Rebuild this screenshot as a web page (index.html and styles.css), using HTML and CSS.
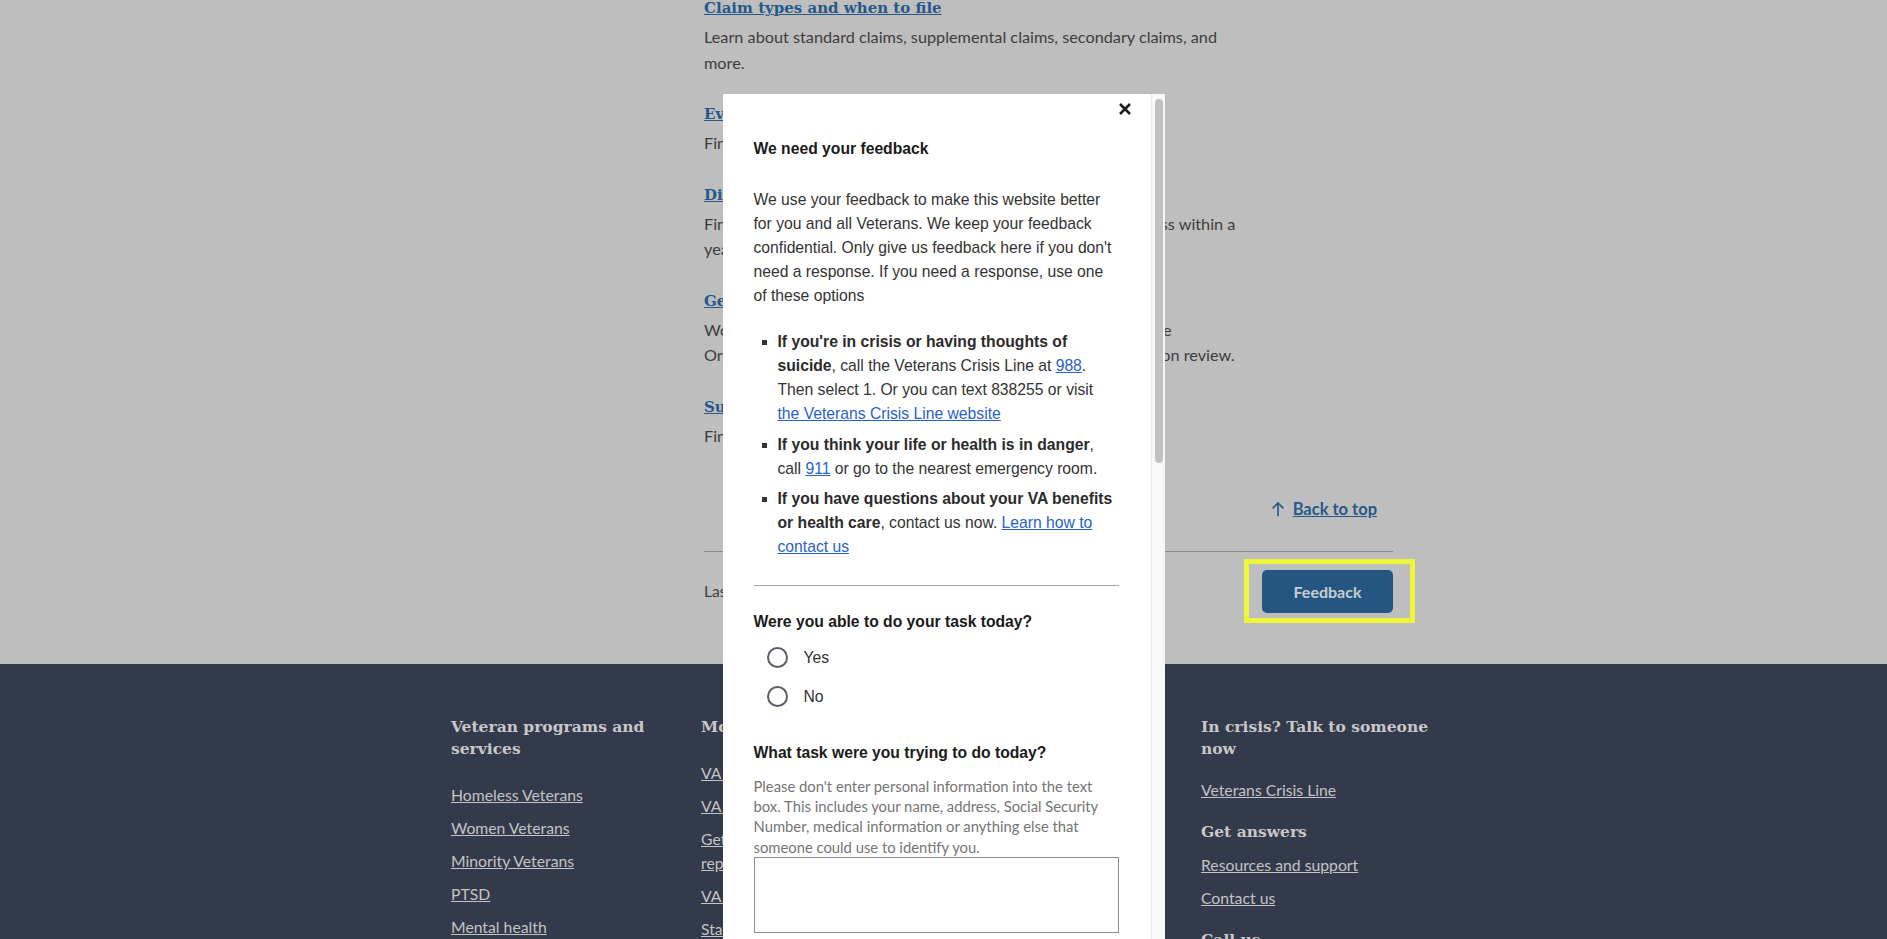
FILE: index.html
```html
<!DOCTYPE html>
<html lang="en">
<head>
<meta charset="utf-8">
<title>How to file a VA disability claim</title>
<link rel="stylesheet" href="styles.css">
</head>
<body>
<div class="page">
  <main class="layout">
    <aside class="sidenav"></aside>
    <div class="content">
      <section class="related">
        <div class="item">
          <h3><a href="#">Claim types and when to file</a></h3>
          <p>Learn about standard claims, supplemental claims, secondary claims, and more.</p>
        </div>
        <div class="item">
          <h3><a href="#">Evidence needed for your disability claim</a></h3>
          <p>Find out what evidence you need to submit with your claim.</p>
        </div>
        <div class="item">
          <h3><a href="#">Disability benefits after discharge</a></h3>
          <p>Find out if you can get disability compensation for a chronic illness within a year after you leave active service.</p>
        </div>
        <div class="item">
          <h3><a href="#">Get help filing your claim</a></h3>
          <p>Work with a trusted, accredited professional or a Veterans Service Organization (VSO) to help you file your claim or request a decision review.</p>
        </div>
        <div class="item">
          <h3><a href="#">Submit evidence for a claim</a></h3>
          <p>Find out how to submit evidence after you file.</p>
        </div>
      </section>
      <div class="back-row">
        <a class="back" href="#">
          <svg class="back-icon" width="16" height="16" viewBox="0 0 24 24" aria-hidden="true"><path d="M12 23V3M4 11l8-8 8 8" fill="none" stroke="currentColor" stroke-width="2.4"/></svg>
          <span>Back to top</span>
        </a>
      </div>
      <hr class="rule">
      <div class="meta-row">
        <p class="updated">Last updated: March 26, 2024</p>
        <div class="focus-ring"><button class="feedback-btn" type="button">Feedback</button></div>
      </div>
    </div>
  </main>
  <footer class="footer">
    <div class="footer-grid">
      <div class="fcol">
        <h2>Veteran programs and services</h2>
        <ul>
          <li><a href="#">Homeless Veterans</a></li>
          <li><a href="#">Women Veterans</a></li>
          <li><a href="#">Minority Veterans</a></li>
          <li><a href="#">PTSD</a></li>
          <li><a href="#">Mental health</a></li>
          <li><a href="#">Adaptive sports</a></li>
        </ul>
      </div>
      <div class="fcol">
        <h2>More VA resources</h2>
        <ul>
          <li><a href="#">VA forms</a></li>
          <li><a href="#">VA mobile apps</a></li>
          <li><a href="#">Get help from an accredited representative</a></li>
          <li><a href="#">VA Privacy Service</a></li>
          <li><a href="#">State Veterans Affairs offices</a></li>
        </ul>
      </div>
      <div class="fcol">
        <h2>Get VA updates</h2>
        <ul>
          <li><a href="#">Sign up for email</a></li>
          <li><a href="#">Facebook</a></li>
          <li><a href="#">Instagram</a></li>
          <li><a href="#">YouTube</a></li>
        </ul>
      </div>
      <div class="fcol">
        <h2>In crisis? Talk to someone now</h2>
        <ul class="crisis-links">
          <li><a href="#">Veterans Crisis Line</a></li>
        </ul>
        <h2 class="sub">Get answers</h2>
        <ul class="answer-links">
          <li><a href="#">Resources and support</a></li>
          <li><a href="#">Contact us</a></li>
        </ul>
        <h2 class="sub">Call us</h2>
      </div>
    </div>
  </footer>
</div>

<div class="overlay">
  <div class="modal" role="dialog" aria-labelledby="fb-title">
    <div class="modal-body">
      <div class="modal-top">
        <button class="close" type="button" aria-label="Close">
          <svg width="12" height="12" viewBox="0 0 12 12" aria-hidden="true"><path d="M1 1L11 11M11 1L1 11" stroke="#1b1b1b" stroke-width="2.5" fill="none"/></svg>
        </button>
      </div>
      <h2 class="m-title" id="fb-title">We need your feedback</h2>
      <p class="m-intro">We use your feedback to make this website better for you and all Veterans. We keep your feedback confidential. Only give us feedback here if you don't need a response. If you need a response, use one of these options</p>
      <ul class="m-list">
        <li><strong>If you're in crisis or having thoughts of suicide</strong>, call the Veterans Crisis Line at <a href="#">988</a>. Then select 1. Or you can text 838255 or visit <a href="#">the Veterans Crisis Line website</a></li>
        <li><strong>If you think your life or health is in danger</strong>, call <a href="#">911</a> or go to the nearest emergency room.</li>
        <li><strong>If you have questions about your VA benefits or health care</strong>, contact us now. <a href="#">Learn how to contact us</a></li>
      </ul>
      <hr class="m-rule">
      <div class="m-question">Were you able to do your task today?</div>
      <div class="radios">
        <label class="radio"><span class="dot"></span><span>Yes</span></label>
        <label class="radio"><span class="dot"></span><span>No</span></label>
      </div>
      <label class="m-label" for="task">What task were you trying to do today?</label>
      <p class="m-hint">Please don't enter personal information into the text box. This includes your name, address, Social Security Number, medical information or anything else that someone could use to identify you.</p>
      <textarea class="m-text" id="task"></textarea>
    </div>
    <div class="m-scroll"><div class="m-thumb"></div></div>
  </div>
</div>
</body>
</html>
```

FILE: styles.css
```css
* { box-sizing: border-box; }

html, body {
  margin: 0;
  height: 100%;
  overflow: hidden;
}

body {
  background: #bebebe;
  font-family: Lato, "Liberation Sans", sans-serif;
  color: #3d3d3d;
}

/* ---------- main page ---------- */
.layout {
  width: 1000px;
  margin: 0 auto;
  display: grid;
  grid-template-columns: 250px 1fr;
}

.content {
  display: flex;
  flex-direction: column;
  padding: 0 50.5px 0 10.5px;
}

.related {
  display: flex;
  flex-direction: column;
  gap: 27px;
  margin-top: -4px;
}

.item h3 {
  margin: 0 0 4px;
  font: bold 15px/24px "DejaVu Serif", serif;
}

.item h3 a {
  color: #27588a;
  text-decoration: underline;
}

.item p {
  margin: 0;
  max-width: 548px;
  font-size: 16.25px;
  line-height: 25.5px;
}

.back-row {
  display: flex;
  justify-content: flex-end;
  margin-top: 49px;
  padding-right: 16px;
  line-height: 24px;
}

.back {
  display: inline-flex;
  align-items: center;
  gap: 7px;
  color: #27588a;
  font-weight: bold;
  font-size: 16.5px;
  text-decoration: none;
}

.back span { text-decoration: underline; }

.back-icon { display: block; }

.rule {
  margin: 30px 0 0;
  border: 0;
  border-top: 1px solid #8a8a8a;
  height: 0;
}

.meta-row {
  display: flex;
  justify-content: space-between;
  align-items: center;
  margin-top: 7px;
}

.updated {
  margin: 0;
  font-size: 15.5px;
}

.focus-ring {
  display: flex;
  border: 5px solid #eef63b;
  padding: 6px 17px 5px 13px;
  margin-right: -22px;
}

.feedback-btn {
  width: 131px;
  height: 43px;
  border: 0;
  border-radius: 5px;
  background: #245681;
  color: #c9ccd0;
  font: bold 16px Lato, sans-serif;
}

/* ---------- footer ---------- */
.footer {
  margin-top: 41px;
  background: #323a4b;
  padding-top: 52px;
  height: 520px;
}

.footer-grid {
  width: 1000px;
  margin: 0 auto;
  display: grid;
  grid-template-columns: repeat(4, 250px);
}

.fcol { padding: 0 7.5px; }

.fcol h2 {
  margin: 0;
  font: bold 15.5px/22px "DejaVu Serif", serif;
  color: #c8c8c8;
}

.fcol ul {
  list-style: none;
  margin: 23px 0 0;
  padding: 0;
}

.fcol li {
  font-size: 15.75px;
  line-height: 24px;
}

.fcol li + li { margin-top: 9px; }

.fcol a { color: #c4c4c4; }

.fcol .crisis-links { margin-top: 18px; }
.fcol .sub { margin-top: 19px; }
.fcol .answer-links { margin-top: 10px; }

/* ---------- feedback modal ---------- */
.overlay {
  position: fixed;
  inset: 0;
  display: flex;
  justify-content: center;
  align-items: flex-start;
  padding-top: 94px;
}

.modal {
  width: 442px;
  height: 900px;
  background: #fff;
  display: flex;
  overflow: hidden;
}

.modal-body {
  width: 428px;
  flex: none;
  padding: 0 32px 0 31px;
  font-family: "Liberation Sans", Arial, sans-serif;
  font-size: 15.7px;
  line-height: 24px;
  color: #333;
}

.modal-top {
  display: flex;
  justify-content: flex-end;
  align-items: flex-start;
  height: 43px;
  padding-top: 9px;
  margin-right: -12px;
}

.close {
  display: block;
  width: 12px;
  height: 12px;
  padding: 0;
  border: 0;
  background: none;
}

.close svg { display: block; }

.m-title {
  margin: 0 0 27px;
  font-size: 15.7px;
  line-height: 24px;
  font-weight: bold;
  color: #1b1b1b;
}

.m-intro { margin: 0 0 22px; }

.m-list {
  margin: 0 0 25.5px;
  padding-left: 24px;
  list-style: square;
}

.m-list li + li { margin-top: 6.5px; }

.m-list strong { color: #2b2b2b; }

.m-list a { color: #2962c6; }

.m-rule {
  margin: 0;
  border: 0;
  border-top: 1px solid #a5a5a5;
  height: 0;
}

.m-question {
  margin-top: 24px;
  font-weight: bold;
  color: #1b1b1b;
}

.radios {
  display: flex;
  flex-direction: column;
  gap: 6px;
  margin-top: 7.5px;
}

.radio {
  display: flex;
  align-items: center;
  gap: 16px;
  height: 33px;
  padding-left: 13px;
}

.dot {
  width: 21px;
  height: 21px;
  border: 2px solid #5a5f66;
  border-radius: 50%;
  flex: none;
}

.m-label {
  display: block;
  margin-top: 27.5px;
  font-weight: bold;
  color: #1b1b1b;
}

.m-hint {
  margin: 11px 0 0;
  font-family: Lato, sans-serif;
  font-size: 14.8px;
  line-height: 20.4px;
  color: #757575;
}

.m-text {
  display: block;
  width: 100%;
  height: 76px;
  margin: 0;
  border: 1px solid #8e8e8e;
  resize: none;
}

.m-scroll {
  width: 14px;
  flex: none;
  background: #f8f8f8;
  border-left: 1px solid #ededed;
  padding: 5px 2px 0 3px;
}

.m-thumb {
  width: 8px;
  height: 364px;
  border-radius: 4px;
  background: #c1c1c1;
}
```
